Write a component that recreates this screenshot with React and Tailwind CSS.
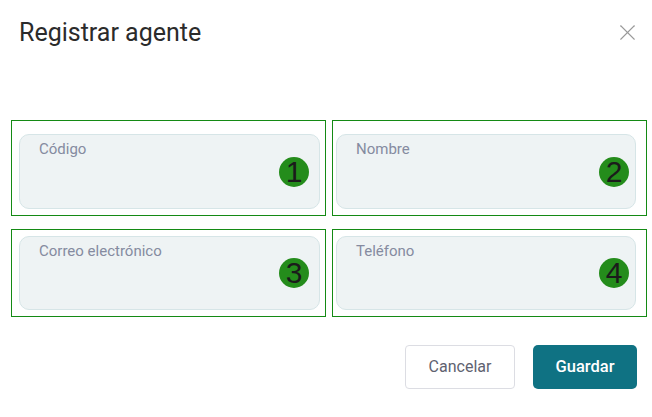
import React from "react";
import { X } from "lucide-react";

const fields = [
  { label: "Código", n: 1, box: "pt-[13px] pb-[6px] pl-[7px] pr-[5px]", badge: "right-[10px]" },
  { label: "Nombre", n: 2, box: "pt-[13px] pb-[6px] pl-[3px] pr-[10px]", badge: "right-[6px]" },
  { label: "Correo electrónico", n: 3, box: "pt-[6px] pb-[6px] pl-[7px] pr-[5px]", badge: "right-[10px]" },
  { label: "Teléfono", n: 4, box: "pt-[6px] pb-[6px] pl-[3px] pr-[10px]", badge: "right-[6px]" },
];

function Field({ label, n, box, badge }) {
  return (
    <div className={`border border-[#148a14] ${box} flex`}>
      <div className="relative flex-1 rounded-[10px] border border-[#d6e5e7] bg-[#eef3f4] pl-[19px] pt-[5px]">
        <span className="block text-[15px] leading-[18px] text-[#858ba0]">{label}</span>
        {/* annotation badge */}
        <span
          className={`absolute top-1/2 -translate-y-1/2 ${badge} flex h-[30px] w-[30px] items-center justify-center rounded-full bg-[#248c1b] font-['Liberation_Sans',sans-serif] text-[30px] leading-none text-[#1b1b1b]`}
        >
          {n}
        </span>
      </div>
    </div>
  );
}

export default function App() {
  return (
    <div className="h-[417px] w-[652px] bg-white font-['Roboto',sans-serif]">
      {/* Header */}
      <div className="flex items-start justify-between pl-[19px] pr-[11px] pt-[18px]">
        <h3 className="text-[25px] leading-[30px] text-[#2b2b2b]">Registrar agente</h3>
        <button className="mt-[1px] text-[#9a9a9a]">
          <X size={27} strokeWidth={1} />
        </button>
      </div>

      {/* Fields */}
      <div className="mt-[72px] grid grid-cols-2 gap-x-[6px] pl-[11px] pr-[5px]">
        <div className="col-span-2 grid grid-cols-2 gap-x-[6px] h-[96px]">
          <Field {...fields[0]} />
          <Field {...fields[1]} />
        </div>
        <div className="col-span-2 mt-[13px] grid grid-cols-2 gap-x-[6px] h-[88px]">
          <Field {...fields[2]} />
          <Field {...fields[3]} />
        </div>
      </div>

      {/* Actions */}
      <div className="mt-[28px] flex justify-end gap-[18px] pr-[15px]">
        <button className="h-[44px] w-[110px] rounded-[4px] border border-[#dcdde3] bg-white text-[16px] text-[#5f6270]">
          Cancelar
        </button>
        <button className="h-[44px] w-[104px] rounded-[5px] bg-[#0f7283] text-[16.5px] font-medium text-white">
          Guardar
        </button>
      </div>
    </div>
  );
}
